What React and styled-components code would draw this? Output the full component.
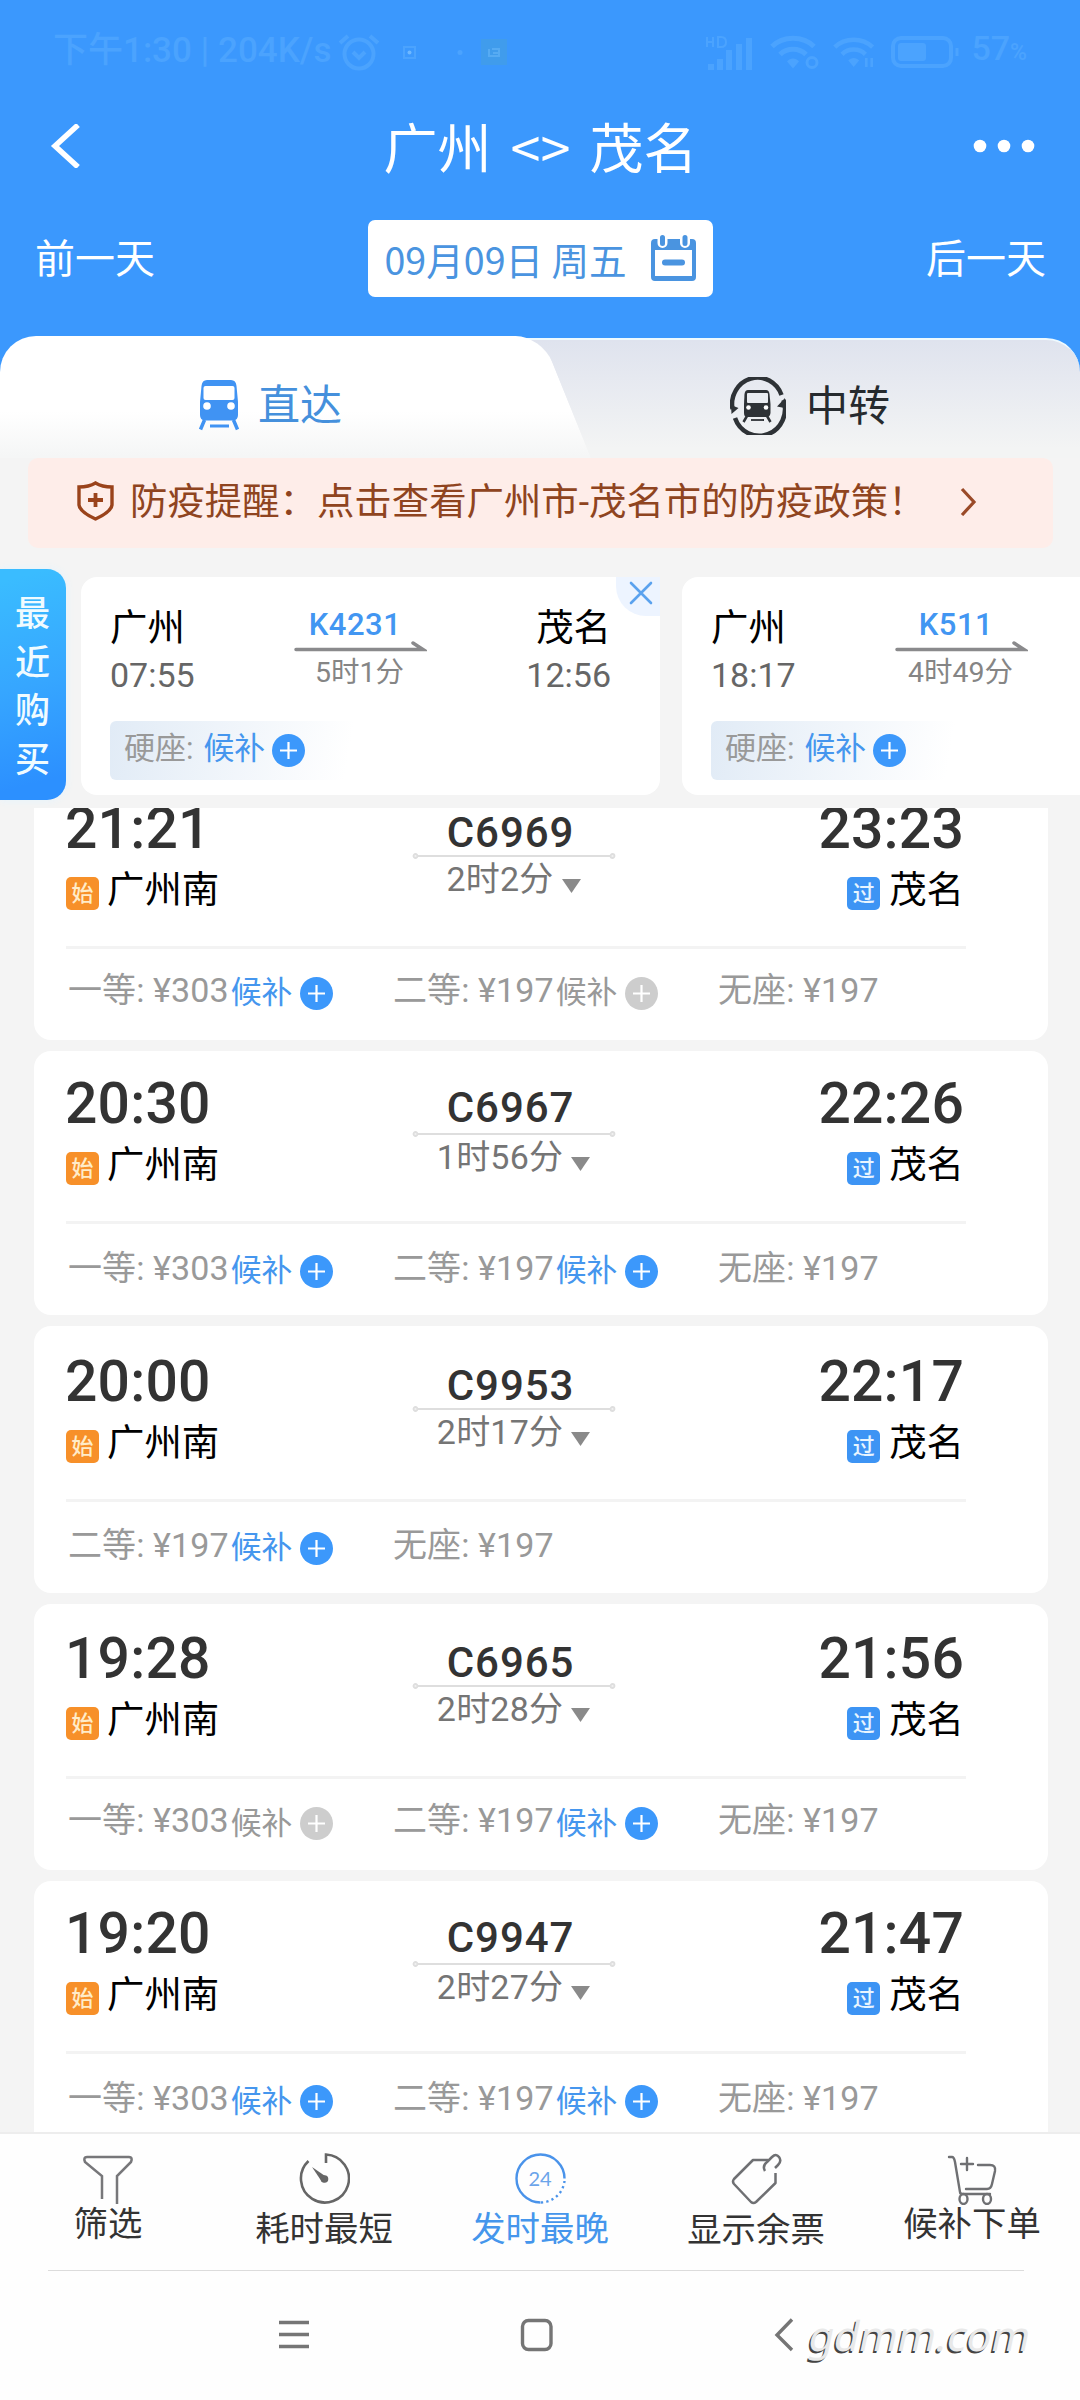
import React from "react";
import styled, { createGlobalStyle } from 'styled-components';

const GlobalStyle = createGlobalStyle`
  * {
    box-sizing: border-box;
  }

  body {
    margin: 0;
    background-color: #f4f4f4;
    font-family: Roboto, "Noto Sans CJK SC", sans-serif;
  }

  svg {
    display: block;
    flex: none;
  }
`

const Page = styled.div`
  width: 1080px;
  height: 2400px;
  display: flex;
  flex-direction: column;
  overflow: hidden;
  position: relative;
  white-space: nowrap;
`

/* Header */

const Header = styled.header`
  height: 336px;
  flex: none;
  background-color: #3b98fd;
  color: #fff;
`

const StatusBar = styled.div`
  height: 104px;
  padding: 0 53px;
  display: flex;
  align-items: center;
  justify-content: space-between;
  color: #4ba3fe;
  font-size: 35px;
  line-height: 40px;
  font-weight: 500;
`

const StatusGroup = styled.div`
  display: flex;
  align-items: center;
  gap: ${({ $gap }) => $gap}px;
`

const StatusText = styled.span`
  margin-top: -3px;
`

const Battery = styled.span`
  margin: -3px 0 0 -3px;
  font-size: 34px;
`

const Percent = styled.small`
  font-size: 23px;
`

const TitleBar = styled.div`
  height: 84px;
  padding: 0 45px 0 50px;
  display: flex;
  align-items: center;
  justify-content: space-between;
`

const Title = styled.h1`
  margin: -1px 0 0 26px;
  display: flex;
  align-items: center;
  gap: 19px;
  font-family: "Noto Sans CJK SC", sans-serif;
  font-size: 54px;
  line-height: 84px;
  font-weight: 400;
`

const DateBar = styled.div`
  height: 77px;
  margin-top: 32px;
  padding: 0 34px 0 35px;
  display: grid;
  grid-template-columns: 1fr 344px 1fr;
  align-items: center;
  font-size: 40px;
`

const DayLink = styled.span`
  margin-top: -5px;
  text-align: ${({ $end }) => ($end ? "right" : "left")};
`

const DateBox = styled.div`
  height: 77px;
  margin-left: -1px;
  padding: 0 17px;
  display: flex;
  align-items: center;
  justify-content: space-between;
  border-radius: 7px;
  background-color: #fff;
  color: #4a94e0;
  font-family: "Noto Sans CJK SC", sans-serif;
  font-size: 37.6px;
  line-height: 76px;

  svg {
    margin-top: -1px;
  }
`

/* Tabs */

const TabStrip = styled.div`
  height: 122px;
  flex: none;
  display: flex;
  background: linear-gradient(#3b98fd 60px, #f4f4f4 60px);
`

const Tab = styled.div`
  display: flex;
  align-items: center;
  font-size: 42px;
  line-height: 60px;
  padding-top: 18px;
`

const DirectTab = styled(Tab)`
  position: relative;
  z-index: 1;
  width: 500px;
  padding-left: 198px;
  padding-bottom: 2px;
  gap: 18px;
  color: #4590dc;
  border-top-left-radius: 36px;
  background: linear-gradient(#fff 62%, #f5f6f6 98%);

  &::after {
    content: '';
    position: absolute;
    z-index: -1;
    top: 0;
    right: -91px;
    width: 150px;
    height: 100%;
    border-top-right-radius: 26px;
    background: linear-gradient(#fff 62%, #f5f6f6 98%);
    transform: skewX(22deg);
    transform-origin: bottom right;
    clip-path: inset(0 0 0 50px);
  }
`

const TransferTab = styled(Tab)`
  flex: 1;
  margin-top: 2px;
  margin-left: -60px;
  padding-left: 290px;
  padding-bottom: 4px;
  gap: 20px;
  color: #262a2e;
  border-top: 2px solid #eefaff;
  border-top-right-radius: 34px;
  background: linear-gradient(#dfe3ee, #f3f4f4 92%);
`

const TabLabel = styled.span`
  padding-top: 2px;
`

const Notice = styled.div`
  height: 90px;
  flex: none;
  margin: 0 27px 0 28px;
  padding: 0 76px 4px 49px;
  display: flex;
  align-items: center;
  border-radius: 10px;
  background-color: #feede9;
  color: #8f4420;
  font-size: 37.4px;
  line-height: 60px;

  span {
    flex: 1;
    margin-left: 16px;
    padding-top: 1px;
  }
`

/* Recent purchases */

const Recent = styled.section`
  height: 260px;
  flex: none;
  padding-top: 21px;
  display: flex;
`

const RecentLabel = styled.div`
  width: 66px;
  height: 231px;
  flex: none;
  padding: 22px 0 0 15px;
  border-radius: 0 19px 19px 0;
  background: linear-gradient(165deg, #3abcff 5%, #36a6ff 50%, #2c90ff 90%);
  box-shadow: 0 0 8px #e3f3fd;
  color: #f0fbff;
  font-size: 35px;
  font-weight: 500;
  line-height: 48.7px;
  white-space: normal;
`

const RecentCards = styled.div`
  margin: 8px 0 0 15px;
  display: flex;
  gap: 22px;
`

const RecentCard = styled.div`
  position: relative;
  width: 579px;
  height: 218px;
  flex: none;
  padding: 28px 49px 0 29px;
  border-radius: 16px;
  background-color: #fff;
`

const RecentTrip = styled.div`
  display: flex;
  justify-content: space-between;
`

const RecentStop = styled.div`
  text-align: ${({ $end }) => ($end ? "right" : "left")};
`

const RecentStation = styled.div`
  font-size: 37.4px;
  line-height: 47px;
  color: #000;
`

const RecentTime = styled.div`
  font-size: 34px;
  line-height: 47px;
  color: #666;
`

const RecentMiddle = styled.div`
  width: 134px;
  margin-left: -2px;
  padding-top: 3px;
  display: flex;
  flex-direction: column;
  align-items: center;
`

const RecentCode = styled.div`
  margin-left: -9px;
  font-size: 31px;
  line-height: 33px;
  letter-spacing: 0.5px;
  font-weight: 500;
  color: #4296f2;
`

const RecentDuration = styled.div`
  font-size: 28.5px;
  line-height: 34px;
  margin-top: 3px;
  color: #858585;
`

const RecentSeat = styled.div`
  width: 256px;
  height: 59px;
  margin-top: 22px;
  padding-left: 14px;
  display: flex;
  align-items: center;
  border-radius: 6px;
  background: linear-gradient(100deg, #e1ebf6, #fff 92%);
  font-size: 31px;
  line-height: 50px;
  color: #999;

  span {
    margin: -4px 10px 0 0;
  }

  svg {
    margin-left: -3px;
  }
`

const CloseButton = styled.div`
  position: absolute;
  top: 0;
  right: 0;
  width: 44px;
  height: 39px;
  padding: 4px 0 0 13px;
  border-bottom-left-radius: 30px;
  background-color: #edf4ff;
`

/* Train list */

const TrainList = styled.main`
  flex: 1;
  min-height: 0;
  padding: 0 32px 0 33.5px;
  overflow: hidden;
`

const TrainCard = styled.article`
  height: ${({ $height }) => $height}px;
  padding: ${({ $pad }) => $pad}px 82px 0 32.5px;
  margin-bottom: 10.5px;
  border-radius: 17px;
  background-color: #fff;

  &:first-child {
    margin-top: -32px;
  }
`

const Trip = styled.div`
  height: 151px;
  display: flex;
  border-bottom: 3px solid #f3f3f3;
`

const Stop = styled.div`
  width: ${({ $end }) => ($end ? 348 : 346)}px;
  display: flex;
  flex-direction: column;
  align-items: ${({ $end }) => ($end ? "flex-end" : "flex-start")};
`

const StopTime = styled.div`
  margin-left: -1px;
  font-size: 57px;
  line-height: 61px;
  letter-spacing: 0.2px;
  font-weight: 500;
  color: #333;
`

const Station = styled.div`
  margin-top: 9px;
  height: 44px;
  display: flex;
  align-items: center;
  gap: ${({ $end }) => ($end ? 9 : 8)}px;
  font-size: 37.4px;
  line-height: 44px;
  color: #000;
`

const StopMark = styled.span`
  width: 33px;
  height: 33px;
  margin-top: 7px;
  border-radius: 5px;
  background-color: ${({ $pass }) => ($pass ? "#3d94f4" : "#f79029")};
  color: ${({ $pass }) => ($pass ? "#e8f5ff" : "#ffecc9")};
  font-size: 22px;
  line-height: 33px;
  font-weight: 500;
  text-align: center;
`

const Middle = styled.div`
  width: 204px;
  padding-top: 13px;
  display: flex;
  flex-direction: column;
  align-items: center;
`

const TrainCode = styled.div`
  margin-left: -7px;
  font-size: 42px;
  line-height: 44px;
  letter-spacing: 0.9px;
  font-weight: 500;
  color: #333;
`

const MiddleLine = styled.svg`
  margin-top: ${({ $gap }) => $gap - 3}px;
`

const Duration = styled.div`
  margin: 1px 0 0 -1px;
  display: flex;
  align-items: center;
  gap: 8px;
  font-size: 34px;
  line-height: 36px;
  letter-spacing: 0.2px;
  color: #757575;

  svg {
    margin-top: 13px;
  }
`

const Seats = styled.div`
  margin-top: ${({ $gap }) => $gap + 15}px;
  padding-left: 2px;
  display: grid;
  grid-template-columns: repeat(3, 325px);
`

const Seat = styled.div`
  display: flex;
  align-items: center;
  font-size: 34px;
  line-height: 44px;
  letter-spacing: 0.1px;
  color: #999;

  svg {
    margin: 7px 0 0 8px;
  }
`

const Waitlist = styled.span`
  margin-top: ${({ $flat }) => ($flat ? -7 : 7)}px;
  margin-left: ${({ $flat }) => ($flat ? 0 : 2)}px;
  font-size: 30.8px;
  color: ${({ $active }) => ($active ? "#4596ee" : "#999")};
`

/* Bottom */

const BottomBar = styled.nav`
  height: 138px;
  flex: none;
  display: grid;
  grid-template-columns: repeat(5, 1fr);
  border-top: 2px solid #ededed;
  background-color: #fefefe;
`

const BottomItem = styled.div`
  padding-top: ${({ $high }) => ($high ? 21 : 19)}px;
  display: flex;
  flex-direction: column;
  align-items: center;
  font-size: 34.4px;
  line-height: 40px;
  color: ${({ $active }) => ($active ? "#4596ec" : "#333")};

  span {
    margin-top: ${({ $high }) => ($high ? -1 : 5)}px;
  }
`

const Hint = styled.text`
  font-family: Lato, sans-serif;
  font-size: 20px;
  text-anchor: middle;
  fill: #6ba4ea;
`

const SystemNav = styled.div`
  height: 130px;
  flex: none;
  padding-left: 279px;
  display: flex;
  align-items: center;
  background-color: #fefefe;

  &::before {
    content: '';
    align-self: flex-start;
    width: 976px;
    height: 1px;
    margin-left: -231px;
    margin-right: -745px;
    background-color: #dcdcdc;
  }
`

const Watermark = styled.div`
  position: absolute;
  right: 49px;
  bottom: 37px;
  font-family: "Noto Sans", "Open Sans", sans-serif;
  font-size: 41px;
  line-height: 56px;
  color: #e9e9e9;
  text-shadow: -1.5px 1.5px 0 #444;
  transform: skewX(-12deg);
`

const trains = [
  {
    code: "C6969", depart: "21:21", arrive: "23:23", duration: "2时2分",
    height: 264, pad: 22, lineGap: 0, seatGap: 0,
    seats: [["一等", 303, "on"], ["二等", 197, "off"], ["无座", 197]],
  },
  {
    code: "C6967", depart: "20:30", arrive: "22:26", duration: "1时56分",
    height: 264.5, pad: 22.5, lineGap: 3, seatGap: 3,
    seats: [["一等", 303, "on"], ["二等", 197, "on"], ["无座", 197]],
  },
  {
    code: "C9953", depart: "20:00", arrive: "22:17", duration: "2时17分",
    height: 267.5, pad: 25.5, lineGap: 0, seatGap: 2,
    seats: [["二等", 197, "on"], ["无座", 197]],
  },
  {
    code: "C6965", depart: "19:28", arrive: "21:56", duration: "2时28分",
    height: 266.5, pad: 24, lineGap: 0, seatGap: 1,
    seats: [["一等", 303, "off"], ["二等", 197, "on"], ["无座", 197]],
  },
  {
    code: "C9947", depart: "19:20", arrive: "21:47", duration: "2时27分",
    height: 266, pad: 22, lineGap: 3, seatGap: 4,
    seats: [["一等", 303, "on"], ["二等", 197, "on"], ["无座", 197]],
  },
];

const recentTrips = [
  { code: "K4231", depart: "07:55", arrive: "12:56", duration: "5时1分", closable: true },
  { code: "K511", depart: "18:17", arrive: "23:06", duration: "4时49分" },
];

const PlusCircle = ({ active }) => (
  <svg width="33" height="33" viewBox="0 0 33 33">
    <circle cx="16.5" cy="16.5" r="16.5" fill={active ? "#3c98fb" : "#cdcdcd"} />
    <path d="M16.5 8V25M8 16.5H25" stroke="#fff" strokeWidth="2.2" />
  </svg>
);

const WifiIcon = ({ width, children }) => (
  <svg width={width} height="37" viewBox="0 0 50 36" fill="none" stroke="#4ba3fe" strokeWidth="5">
    <path d="M2 12C13 1 33 1 44 12M10 20C17 13 29 13 36 20" />
    <path d="M17 27C20 23 26 23 29 27L23 34Z" fill="#4ba3fe" stroke="none" />
    {children}
  </svg>
);

const StatusIcons = () => (
  <svg width="174" height="38" viewBox="0 0 174 38" fill="none" stroke="#4ba3fe" strokeWidth="4">
    <circle cx="22" cy="21" r="14.5" />
    <path d="M3 10L11 3M33 3L41 10M16 19L22 25L28 19" />
    <rect x="67" y="14" width="11" height="11" strokeWidth="2" />
    <circle cx="72.5" cy="19.5" r="2" fill="#6fb8ff" stroke="none" />
    <circle cx="123" cy="19.5" r="2.5" fill="#4ba3fe" stroke="none" />
    <rect x="144" y="6" width="26" height="26" fill="#409cec" stroke="none" />
    <path d="M152 16V23H162V16H155M156 20H161" stroke="#56abf3" strokeWidth="2" />
  </svg>
);

const SignalIcon = () => (
  <svg width="54" height="38" viewBox="0 0 54 38" fill="#4ba3fe">
    <path d="M5 31h6v6H5zM14 26h6v11h-6zM23 17h6v20h-6zM33 11h6v26h-6zM43 5h6v32h-6z" />
    <path d="M4 4V14M10 4V14M4 9H10M15 4V14H18Q23 14 23 9T18 4Z" fill="none" stroke="#4ba3fe" strokeWidth="2" />
  </svg>
);

const BatteryIcon = () => (
  <svg width="70" height="32" viewBox="0 0 70 32" fill="none">
    <rect x="2" y="2" width="58" height="28" rx="8" stroke="#4ba3fe" strokeWidth="4" />
    <rect x="7" y="7" width="28" height="18" rx="3" fill="#4ba3fe" />
    <path d="M66 12V20" stroke="#4ba3fe" strokeWidth="3" />
  </svg>
);

const CalendarIcon = () => (
  <svg width="45" height="46" viewBox="0 0 45 46">
    <path d="M4 4H41Q45 4 45 8V42Q45 46 41 46H4Q0 46 0 42V8Q0 4 4 4ZM4 15V41H41V15Z" fill="#4a94e0" fillRule="evenodd" />
    <path d="M11.5 3V8M34 3V8" stroke="#fff" strokeWidth="10" strokeLinecap="round" />
    <path d="M11.5 2.5V8.5M34 2.5V8.5" stroke="#4a94e0" strokeWidth="5" strokeLinecap="round" />
    <path d="M14 27.5H31" stroke="#4a94e0" strokeWidth="6" strokeLinecap="round" />
  </svg>
);

const TrainIcon = () => (
  <svg width="42" height="51" viewBox="0 0 42 51">
    <path d="M9 0H33Q38 0 38.5 6L40 22V35Q40 40 35 40.5H7Q2 40 2 35V22L3.5 6Q4 0 9 0Z" fill="#4093f3" />
    <rect x="5.5" y="6" width="31" height="14" rx="2" fill="#fff" />
    <circle cx="9" cy="26" r="3.8" fill="#fff" />
    <circle cx="33" cy="26" r="3.8" fill="#fff" />
    <path d="M6.5 40L2.5 49.5M35.5 40L39.5 49.5" stroke="#4093f3" strokeWidth="3.5" />
    <path d="M12 46H31" stroke="#4093f3" strokeWidth="3" />
  </svg>
);

const TransferIcon = () => (
  <svg width="56" height="58" viewBox="0 0 56 58" fill="#2e3236">
    <g fill="none" stroke="#2e3236" strokeWidth="4.5">
      <path d="M2.5 32A25.5 26.5 0 0 1 51.5 18" />
      <path d="M53.5 23A25.5 26.5 0 0 1 5 41" />
    </g>
    <path d="M1 28L8.5 31L1.5 37ZM55 21L54.5 31L47 29.5Z" />
    <path d="M18 13H36Q39 13 39.5 17L40.5 27V36Q40 40 37 40H17Q14 40 14 36V27L14.5 17Q15 13 18 13Z" />
    <rect x="17" y="16" width="21" height="10" rx="1" fill="#e9ecf1" />
    <circle cx="18.5" cy="30.5" r="2.3" fill="#fff" />
    <circle cx="36" cy="30.5" r="2.3" fill="#fff" />
    <path d="M17 39L13.5 45M37 39L40.5 45" stroke="#2e3236" strokeWidth="2.5" />
    <path d="M21 43H34" stroke="#2e3236" strokeWidth="1.8" />
  </svg>
);

const ShieldIcon = () => (
  <svg width="37" height="40" viewBox="0 0 37 40" fill="none" stroke="#9a431b">
    <path d="M18.5 2Q25 6 35 6V24Q34 31 18.5 38Q3 31 2 24V6Q12 6 18.5 2Z" strokeWidth="3.4" />
    <path d="M18.5 12V26M11 19H26" strokeWidth="3.8" />
  </svg>
);

const FunnelIcon = () => (
  <svg width="52" height="50" viewBox="0 0 52 50" fill="none" stroke="#77777a" strokeWidth="2.5">
    <path d="M20 44V21L3 7Q1 2 5 2H47Q51 2 49 7L35 21V49" />
  </svg>
);

const TimerIcon = () => (
  <svg width="51" height="51" viewBox="0 0 51 51" fill="none" stroke="#666" strokeWidth="2.6">
    <path d="M9.5 8A24 24 0 1 0 27 1.5V10" />
    <path d="M13 14L23 29Q28 30 29 25Z" fill="#666" stroke="none" />
    <circle cx="25.5" cy="26" r="3.8" fill="#666" stroke="none" />
  </svg>
);

const LatestIcon = () => (
  <svg width="51" height="51" viewBox="0 0 51 51" fill="none" stroke="#4a93ea" strokeWidth="2.4">
    <path d="M25.5 49.5A24 24 0 1 1 49.5 25.5" />
    <path d="M49.5 28A24 24 0 0 1 26 49.5" strokeDasharray="2.2 3.2" />
    <Hint x="25" y="33" stroke="none">24</Hint>
  </svg>
);

const TagIcon = () => (
  <svg width="51" height="52" viewBox="0 0 51 52" fill="none" stroke="#6f7073" strokeWidth="2.5" strokeLinejoin="round">
    <path d="M37 7H22L3 26Q1 28.5 3 31L20 49Q22.500 51 25 49L44.5 30V20" />
    <path d="M34 18Q31 13 36 9L41 4Q45 0 48 4T47 12L44 15" />
  </svg>
);

const CartIcon = () => (
  <svg width="50" height="50" viewBox="0 0 50 50" fill="none" stroke="#6f7073" strokeWidth="2.4" strokeLinecap="round">
    <path d="M2 2H5Q7 2 8 7L13 37Q13 39 16 39H43" />
    <path d="M31 10H43Q49 10 48 16L45 29Q44 34 40 34H19M20 3V15M14 9H26" />
    <ellipse cx="16.5" cy="44" rx="4" ry="5" />
    <ellipse cx="40" cy="44" rx="4" ry="5" />
  </svg>
);

const RecentItem = ({ trip }) => (
  <RecentCard>
    <RecentTrip>
      <RecentStop>
        <RecentStation>广州</RecentStation>
        <RecentTime>{trip.depart}</RecentTime>
      </RecentStop>
      <RecentMiddle>
        <RecentCode>{trip.code}</RecentCode>
        <svg width="134" height="12" viewBox="0 0 134 12" fill="none" stroke="#8a8a8c" strokeWidth="3.5" strokeLinecap="round">
          <path d="M3 8.5H130L120 2" />
        </svg>
        <RecentDuration>{trip.duration}</RecentDuration>
      </RecentMiddle>
      <RecentStop $end>
        <RecentStation>茂名</RecentStation>
        <RecentTime>{trip.arrive}</RecentTime>
      </RecentStop>
    </RecentTrip>
    <RecentSeat>
      <span>硬座:</span>
      <Waitlist $active $flat>候补</Waitlist>
      <PlusCircle active />
    </RecentSeat>
    {trip.closable && (
      <CloseButton>
        <svg width="24" height="24" viewBox="0 0 24 24" stroke="#5ba2ee" strokeWidth="2.6" strokeLinecap="round">
          <path d="M2 2L22 22M22 2L2 22" />
        </svg>
      </CloseButton>
    )}
  </RecentCard>
);

const TrainItem = ({ train }) => (
  <TrainCard $height={train.height} $pad={train.pad}>
    <Trip>
      <Stop>
        <StopTime>{train.depart}</StopTime>
        <Station>
          <StopMark>始</StopMark>
          广州南
        </Station>
      </Stop>
      <Middle>
        <TrainCode>{train.code}</TrainCode>
        <MiddleLine $gap={train.lineGap} width="204" height="8" viewBox="0 0 204 8" fill="#f1f1f1" stroke="#dedede" strokeWidth="1.8">
          <path d="M3 4H201" />
          <circle cx="3.5" cy="4" r="2" />
          <circle cx="200.5" cy="4" r="2" />
        </MiddleLine>
        <Duration>
          {train.duration}
          <svg width="19" height="14" viewBox="0 0 19 14">
            <path d="M0 0H19L9.5 14Z" fill="#8a8a8a" />
          </svg>
        </Duration>
      </Middle>
      <Stop $end>
        <StopTime>{train.arrive}</StopTime>
        <Station $end>
          <StopMark $pass>过</StopMark>
          茂名
        </Station>
      </Stop>
    </Trip>
    <Seats $gap={train.seatGap}>
      {train.seats.map(([name, price, state]) => (
        <Seat key={name}>
          {name}: ¥{price}
          {state && <Waitlist $active={state === "on"}>候补</Waitlist>}
          {state && <PlusCircle active={state === "on"} />}
        </Seat>
      ))}
    </Seats>
  </TrainCard>
);

const App = () => (
  <Page>
    <GlobalStyle />
    <Header>
      <StatusBar>
        <StatusGroup $gap={6}>
          <StatusText>下午1:30 | 204K/s</StatusText>
          <StatusIcons />
        </StatusGroup>
        <StatusGroup $gap={13}>
          <SignalIcon />
          <WifiIcon width={50}>
            <circle cx="42" cy="28" r="5" strokeWidth="3" />
          </WifiIcon>
          <WifiIcon width={45}>
            <path d="M37 24V34M43 24V34" strokeWidth="3" />
          </WifiIcon>
          <BatteryIcon />
          <Battery>57<Percent>%</Percent></Battery>
        </StatusGroup>
      </StatusBar>
      <TitleBar>
        <svg width="32" height="44" viewBox="0 0 32 44" fill="none" stroke="#fff" strokeWidth="5.5">
          <path d="M28 1L5 22L28 43" />
        </svg>
        <Title>
          <span>广州</span>
          <span>&lt;&gt;</span>
          <span>茂名</span>
        </Title>
        <svg width="62" height="14" viewBox="0 0 62 14" fill="#fff">
          <circle cx="7" cy="7" r="6.3" />
          <circle cx="31" cy="7" r="6.3" />
          <circle cx="55" cy="7" r="6.3" />
        </svg>
      </TitleBar>
      <DateBar>
        <DayLink>前一天</DayLink>
        <DateBox>
          09月09日 周五
          <CalendarIcon />
        </DateBox>
        <DayLink $end>后一天</DayLink>
      </DateBar>
    </Header>

    <TabStrip>
      <DirectTab>
        <TrainIcon />
        <TabLabel>直达</TabLabel>
      </DirectTab>
      <TransferTab>
        <TransferIcon />
        <TabLabel>中转</TabLabel>
      </TransferTab>
    </TabStrip>

    <Notice>
      <ShieldIcon />
      <span>防疫提醒：点击查看广州市-茂名市的防疫政策！</span>
      <svg width="18" height="30" viewBox="0 0 18 30" fill="none" stroke="#9a4a28" strokeWidth="3.2">
        <path d="M3 3L15 16L3 29" />
      </svg>
    </Notice>

    <Recent>
      <RecentLabel>最近购买</RecentLabel>
      <RecentCards>
        {recentTrips.map((trip) => (
          <RecentItem key={trip.code} trip={trip} />
        ))}
      </RecentCards>
    </Recent>

    <TrainList>
      {trains.map((train) => (
        <TrainItem key={train.code} train={train} />
      ))}
    </TrainList>

    <BottomBar>
      <BottomItem $high>
        <FunnelIcon />
        <span>筛选</span>
      </BottomItem>
      <BottomItem>
        <TimerIcon />
        <span>耗时最短</span>
      </BottomItem>
      <BottomItem $active>
        <LatestIcon />
        <span>发时最晚</span>
      </BottomItem>
      <BottomItem>
        <TagIcon />
        <span>显示余票</span>
      </BottomItem>
      <BottomItem $high>
        <CartIcon />
        <span>候补下单</span>
      </BottomItem>
    </BottomBar>

    <SystemNav>
      <svg width="516" height="34" viewBox="0 0 516 34" fill="none" stroke="#757575" strokeWidth="3.4">
        <path d="M0 4.5H30M0 16.5H30M0 28.5H30" />
        <rect x="243.5" y="2.5" width="28.5" height="29" rx="6" />
        <path d="M513 1.5L498 17L513 32" />
      </svg>
    </SystemNav>
    <Watermark>gdmm.com</Watermark>
  </Page>
);

export default App;
